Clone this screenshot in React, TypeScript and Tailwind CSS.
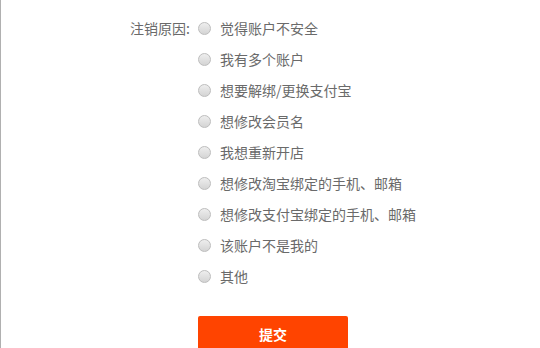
import React from "react";

const reasons = [
  "觉得账户不安全",
  "我有多个账户",
  "想要解绑/更换支付宝",
  "想修改会员名",
  "我想重新开店",
  "想修改淘宝绑定的手机、邮箱",
  "想修改支付宝绑定的手机、邮箱",
  "该账户不是我的",
  "其他",
];

function Radio() {
  return (
    <span className="inline-block w-[13px] h-[13px] rounded-full border border-[#bdbdbd] bg-gradient-to-b from-[#eeeeee] to-[#d4d4d4] shrink-0" />
  );
}

export default function App() {
  return (
    <div
      className="w-[540px] h-[348px] overflow-hidden bg-white border-l border-[#b0b0b0] text-[14px] text-[#6a6a6a]"
      style={{ fontFamily: '"Noto Sans CJK SC", "Noto Sans", sans-serif' }}
    >
      <div className="pt-[13px] flex">
        <div className="w-[197px] pl-[129px] h-[31px] leading-[31px] shrink-0">注销原因:</div>
        <div className="flex flex-col">
          {reasons.map((r) => (
            <div key={r} className="flex items-center h-[31px] gap-[9px]">
              <Radio />
              <span className="leading-[31px]">{r}</span>
            </div>
          ))}
          <button className="mt-[24px] w-[150px] h-[36px] bg-[#ff4400] text-white font-bold text-[14px] rounded-[2px]">
            提交
          </button>
        </div>
      </div>
    </div>
  );
}
